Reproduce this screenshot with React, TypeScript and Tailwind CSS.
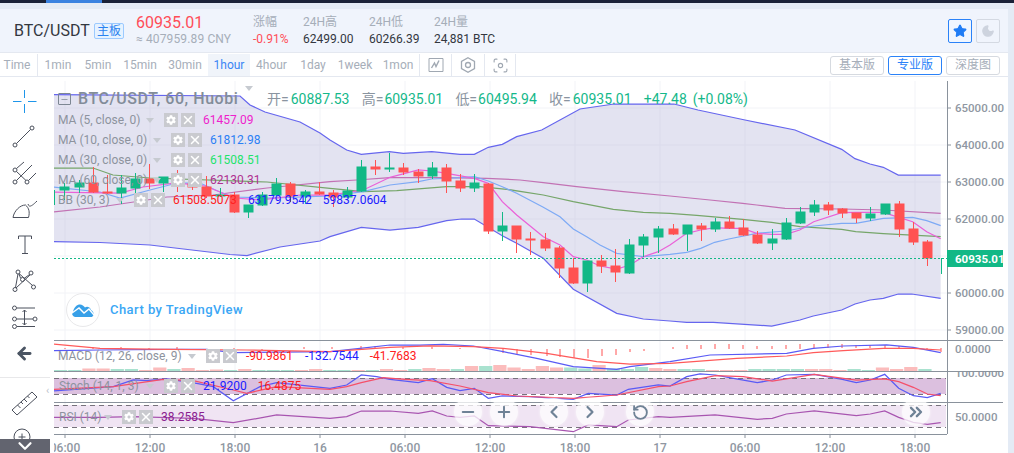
import { ChevronDown, ChevronLeft, ChevronRight, ChevronsRight, Focus, Minus, Moon, Plus, RotateCcw, Star, X, ArrowLeft } from "lucide-react";
import { FaCog } from "react-icons/fa";

type Pt = number[];

// points read off the 3x crops, mapped back to page pixels
const crop = (ox: number, oy: number, pts: Pt[]) => pts.map(([x, y]) => [x / 3 + ox, y / 3 + oy]);
const poly = (pts: Pt[]) => pts.map(([x, y]) => `${x.toFixed(1)},${y.toFixed(1)}`).join(" ");

const upper = [
  [54, 94.5], [240, 96], [250, 105], [265, 112], [300, 122], [320, 133],
  ...crop(330, 130, [[0, 30], [50, 60], [94, 73], [178, 65], [220, 70], [305, 65], [390, 73], [433, 73], [475, 52], [517, 43], [560, 20], [635, 0]]),
  [580, 109], [614, 104], [674, 104], [698, 110], [745, 120],
  ...crop(670, 130, [[375, 0], [515, 58], [555, 86], [600, 102], [640, 112], [685, 135], [812, 135]]),
];
const lower = [
  [54, 241.7], [100, 242.5], [150, 245], [175, 248], [230, 254.5], [247, 255.5], [280, 247], [320, 241],
  ...crop(330, 130, [[0, 320], [94, 292], [180, 300], [265, 292], [350, 272], [395, 267], [433, 267], [517, 317], [560, 340], [640, 385], [730, 478], [860, 550], [940, 567], [1020, 573]]),
  ...crop(670, 130, [[50, 577], [130, 577], [305, 588], [390, 570], [430, 558], [515, 540], [555, 522], [600, 510], [640, 505], [685, 492], [725, 492], [812, 505]]),
];

const ma5 = [
  [54, 192], [120, 193], [143, 187], [176, 183], [205, 186], [235, 198], [260, 200], [300, 195], [330, 195],
  ...crop(330, 130, [[100, 180], [180, 142], [265, 120], [305, 123], [350, 130], [433, 145], [475, 160], [517, 215], [560, 255], [640, 320], [690, 345], [730, 380], [770, 390], [810, 408], [860, 417], [900, 405], [940, 380], [985, 365], [1020, 345]]),
  ...crop(670, 130, [[50, 310], [92, 300], [134, 293], [176, 295], [218, 295], [260, 310], [305, 313], [347, 313], [389, 300], [431, 275], [515, 248], [557, 247], [640, 247], [686, 262], [728, 275], [770, 305], [812, 326]]),
];
const ma10 = [
  [54, 187], [100, 192], [120, 198], [150, 190], [177, 183], [200, 183], [220, 192], [233, 197], [267, 198], [330, 196],
  ...crop(330, 130, [[100, 185], [180, 165], [265, 155], [305, 147], [390, 143], [433, 140], [475, 153], [517, 170], [560, 190], [640, 232], [690, 260], [730, 297], [770, 320], [810, 345], [860, 370], [900, 375], [940, 380], [1020, 373]]),
  ...crop(670, 130, [[50, 367], [92, 355], [134, 337], [176, 327], [260, 310], [347, 303], [431, 288], [515, 280], [557, 280], [640, 265], [728, 262], [770, 272], [812, 287]]),
];
const ma30 = [
  [54, 168], [93, 168], [113, 175], [150, 178], [267, 182],
  ...crop(330, 130, [[0, 175], [100, 185], [200, 182], [350, 170], [450, 170], [530, 178], [640, 195], [730, 215], [850, 238], [940, 247], [1020, 250]]),
  ...crop(670, 130, [[80, 256], [218, 268], [305, 277], [390, 290], [515, 298], [557, 305], [640, 311], [812, 320]]),
];
const ma60 = [
  [54, 212], [100, 207], [127, 203], [167, 197], [213, 195], [267, 188],
  ...crop(330, 130, [[0, 155], [80, 150], [180, 143], [340, 143], [470, 145], [570, 150], [640, 158], [740, 170], [880, 185], [1020, 198]]),
  ...crop(670, 130, [[120, 210], [218, 220], [260, 225], [345, 235], [515, 237], [640, 240], [812, 250]]),
];

const macdBlue = [
  ...crop(0, 230, [[162, 362], [300, 360], [500, 358], [620, 358], [700, 368], [990, 365]]),
  ...crop(330, 330, [[90, 55], [180, 45], [270, 45], [340, 43], [430, 48], [520, 65], [620, 85], [730, 110], [860, 118], [900, 110], [1020, 95]]),
  ...crop(670, 330, [[120, 75], [350, 70], [430, 55], [520, 48], [650, 45], [730, 52], [812, 68]]),
];
const macdRed = [
  ...crop(0, 230, [[162, 342], [300, 355], [500, 358], [740, 360], [990, 365]]),
  ...crop(330, 330, [[180, 52], [300, 48], [430, 50], [520, 55], [650, 70], [800, 95], [900, 102], [1020, 100]]),
  ...crop(670, 330, [[200, 85], [350, 78], [430, 68], [520, 62], [640, 55], [730, 55], [812, 60]]),
];
const stochBlue = [
  ...crop(0, 230, [[162, 483], [340, 470], [400, 450], [440, 452], [500, 447], [590, 460], [640, 470], [700, 512], [780, 470], [830, 458], [990, 475]]),
  ...crop(330, 330, [[50, 165], [94, 135], [140, 140], [180, 148], [265, 158], [307, 146], [350, 172], [390, 182], [433, 175], [475, 205], [517, 198], [600, 200], [730, 208], [775, 190], [860, 195], [895, 178], [985, 165]]),
  ...crop(670, 330, [[0, 168], [50, 140], [90, 132], [136, 135], [178, 143], [262, 158], [307, 150], [349, 135], [433, 133], [517, 148], [559, 158], [601, 150], [644, 133], [686, 175], [730, 197], [772, 203], [812, 190]]),
];
const stochRed = [
  ...crop(0, 230, [[162, 478], [340, 470], [490, 448], [580, 452], [700, 480], [740, 490], [830, 470], [990, 478]]),
  ...crop(330, 330, [[50, 170], [94, 158], [160, 143], [225, 148], [300, 152], [390, 168], [475, 188], [560, 198], [730, 205], [860, 195], [985, 170]]),
  ...crop(670, 330, [[0, 168], [50, 155], [136, 137], [220, 140], [307, 153], [433, 133], [559, 150], [644, 147], [686, 155], [730, 172], [772, 192], [812, 197]]),
];
const rsi = [
  ...crop(0, 230, [[162, 562], [300, 562], [400, 560], [580, 565], [700, 578], [830, 555], [990, 565]]),
  ...crop(330, 330, [[50, 260], [94, 243], [180, 243], [265, 250], [307, 243], [350, 258], [390, 262], [433, 258], [475, 287], [600, 290], [730, 305], [775, 285], [860, 290], [895, 270], [985, 260]]),
  ...crop(670, 330, [[0, 262], [135, 255], [262, 268], [307, 265], [349, 252], [433, 243], [559, 257], [601, 252], [644, 243], [686, 262], [730, 277], [772, 283], [812, 278]]),
];

// x, wick top, body top, body bottom, wick bottom, up?
const candles: [number, number, number, number, number, boolean][] = [
  [54, 190, 190, 205, 205, true], [64, 183, 187, 191, 200, true], [79, 180, 183, 188, 193, true],
  [93, 167, 183, 193, 193, false], [107, 175, 192, 194, 194, false], [121, 175, 188, 194, 204, true],
  [135, 173, 179, 189, 198, true], [149, 164, 179, 184, 189, false], [163, 177, 177, 184, 192, true],
  [177, 170, 177, 185, 192, false], [192, 173, 184, 188, 190, false], [206, 176, 187, 197, 198, false],
  [220, 188, 195, 197, 197, true], [234, 192, 195, 213, 213, false], [248, 205, 205, 213, 218, true],
  [262, 192, 195, 206, 206, true], [276, 178, 184, 196, 196, true], [290, 182, 184, 197, 202, false],
  [305, 190, 192, 197, 204, true], [319, 182, 192, 195, 195, false], [333, 190, 193, 198, 207, false],
  [347, 187, 191, 198, 198, true], [361, 160, 167, 192, 192, true], [375, 160, 167, 170, 175, false],
  [389, 153, 168, 170, 172, true], [403, 163, 168, 173, 175, false], [418, 169, 172, 177, 183, false],
  [432, 162, 168, 177, 179, true], [446, 164, 168, 182, 193, false], [460, 174, 181, 189, 192, false],
  [474, 174, 183, 189, 192, true], [488, 183, 184, 232, 234, false], [502, 212, 226, 232, 241, true],
  [516, 226, 226, 240, 253, false], [530, 232, 239, 241, 255, false], [545, 233, 240, 249, 251, false],
  [559, 246, 248, 269, 278, false], [573, 258, 268, 284, 284, false], [587, 261, 261, 284, 292, true],
  [601, 255, 261, 267, 273, false], [615, 249, 266, 273, 282, false], [629, 239, 245, 274, 274, true],
  [643, 234, 237, 246, 257, true], [658, 226, 229, 238, 253, true], [673, 224, 229, 235, 235, false],
  [687, 225, 225, 235, 251, true], [701, 223, 226, 230, 241, false], [715, 218, 222, 230, 232, true],
  [729, 216, 222, 229, 229, false], [743, 219, 228, 236, 236, false], [757, 231, 235, 244, 244, false],
  [772, 229, 239, 244, 250, true], [786, 218, 223, 240, 240, true], [800, 207, 212, 224, 224, true],
  [814, 200, 205, 213, 216, true], [828, 202, 205, 211, 215, false], [842, 208, 209, 214, 218, false],
  [856, 213, 213, 219, 223, false], [870, 207, 214, 219, 221, true], [885, 204, 204, 215, 215, true],
  [899, 201, 204, 230, 237, false], [913, 222, 229, 243, 245, false], [927, 240, 242, 259, 266, false],
  [941, 258, 258, 259, 274, true],
];

// macd ticks: x, top, bottom
const ticks: Pt[] = [
  [65, 348, 349], [93, 347, 349], [107, 348, 349], [121, 347, 349], [149, 348, 350], [177, 347, 349], [234, 348, 350], [262, 349, 350],
  [304, 347, 349], [332, 347, 349], [361, 346, 349], [375, 346, 349], [403, 347, 349], [432, 347, 349], [460, 348, 349], [488, 348, 349],
  [503, 349, 353], [517, 349, 354], [531, 349, 355], [547, 349, 356], [560, 349, 357], [574, 349, 358], [588, 349, 358], [602, 349, 356], [616, 349, 355], [630, 349, 352], [644, 349, 351], [660, 349, 349],
  [673, 347, 349], [687, 345, 349], [701, 345, 349], [715, 344, 349], [729, 344, 349], [743, 345, 349], [757, 346, 349], [772, 346, 349], [786, 345, 349], [800, 344, 349], [814, 344, 348], [828, 344, 348], [842, 344, 348], [856, 345, 348], [870, 345, 348], [885, 345, 348], [899, 346, 348], [913, 347, 348], [927, 348, 350], [941, 348, 352],
];

// volume-like bars at the foot of the macd pane: up?, top
const bars: [boolean, number][] = [
  [true, 370], [true, 370], [false, 368.5], [false, 368.5], [true, 369], [true, 369], [false, 370], [false, 367.5], [true, 369], [false, 368], [false, 370], [false, 369.5],
  [true, 370], [false, 369], [true, 370], [true, 370], [true, 370], [false, 370], [false, 369], [true, 370], [true, 370], [false, 370],
  [true, 370], [false, 369], [false, 370], [true, 369], [false, 368], [false, 369], [true, 369], [false, 366], [true, 366], [false, 365], [false, 367.5], [false, 369], [false, 366], [false, 367.5], [true, 367.5], [true, 368.5], [false, 365], [true, 368.5], [true, 369], [true, 367], [false, 368],
  [false, 369], [true, 369], [true, 369], [false, 370], [false, 370], [false, 370], [true, 369], [true, 369], [true, 369], [true, 369], [false, 369], [false, 369], [false, 370], [true, 369], [true, 370], [false, 367.5], [false, 369], [false, 367], [true, 369],
];

const gridX = [65, 150, 235, 320, 405, 490, 575, 660, 745, 830, 915];
const gridY = [108, 145, 182, 219, 256, 293, 330];
const priceLabels = ["65000.00", "64000.00", "63000.00", "62000.00", "", "60000.00", "59000.00"];
const timeLabels = ["06:00", "12:00", "18:00", "16", "06:00", "12:00", "18:00", "17", "06:00", "12:00", "18:00"];

const intervals = [
  { label: "1min", w: "w-[40px]" },
  { label: "5min", w: "w-[40px]" },
  { label: "15min", w: "w-[44px]" },
  { label: "30min", w: "w-[46px]" },
  { label: "1hour", w: "w-[42px]", on: true },
  { label: "4hour", w: "w-[43px]" },
  { label: "1day", w: "w-[40px]" },
  { label: "1week", w: "w-[44px]" },
  { label: "1mon", w: "w-[42px]" },
];

const stats = [
  { title: "24H高", value: "62499.00", w: "w-[66px]" },
  { title: "24H低", value: "60266.39", w: "w-[65px]" },
  { title: "24H量", value: "24,881 BTC", w: "w-[70px]" },
];

const roboto = "font-['Roboto',sans-serif]";
const cjk = "font-['Roboto','Noto_Sans_CJK_SC',sans-serif]";

function ToolIcon({ y, children }: { y: number; children: React.ReactNode }) {
  return (
    <svg viewBox={`6 ${y} 36 36`} className="block h-9 w-9 shrink-0 overflow-visible" fill="none" stroke="#4b505c" strokeWidth="1">
      {children}
    </svg>
  );
}

function LeftTools() {
  return (
    <div className="relative flex w-[54px] shrink-0 flex-col pl-[6px] pt-[6px]">
      <ToolIcon y={83}>
        <path d="M24.5 90v8M24.5 104v9M13 101.500h8.500M28 101.500h8.500" stroke="#1e96ea" />
      </ToolIcon>
      <ToolIcon y={119}>
        <circle cx="15" cy="145" r="2" />
        <circle cx="32" cy="128" r="2" />
        <path d="M16.500 143.500L30.500 129.500" />
      </ToolIcon>
      <ToolIcon y={155}>
        <circle cx="15" cy="170" r="2" />
        <circle cx="15" cy="182" r="2" />
        <circle cx="27" cy="182" r="2" />
        <path d="M16.500 168.500L24 162M16.500 180.500L32 165M28.500 180.500L36 173M16.500 171.500L26 180.500" />
      </ToolIcon>
      <ToolIcon y={191}>
        <path d="M13 217.500C14 211 20 205 25.500 205C29 208 30 212 28.500 217.500Z" />
        <path d="M28 204C29 208 32 206 37 201" />
      </ToolIcon>
      <ToolIcon y={227}>
        <path d="M18.500 239v-3h13v3M25 236v17.500M22 253.500h6" />
      </ToolIcon>
      <ToolIcon y={263}>
        <circle cx="18" cy="272" r="2" />
        <circle cx="31" cy="273" r="2" />
        <circle cx="22.500" cy="279.500" r="2" />
        <circle cx="15" cy="289.500" r="2" />
        <circle cx="33.500" cy="287" r="2" />
        <path d="M18 274L15.500 287.500M19 273.500L32.500 285.500M30 275L16 288M24 278.500L29.500 274.500M20.500 278L19 274" />
      </ToolIcon>
      <ToolIcon y={299}>
        <circle cx="14.500" cy="308" r="2" />
        <circle cx="14.500" cy="319" r="2" />
        <circle cx="14.500" cy="326.500" r="2" />
        <circle cx="35" cy="319" r="2" />
        <path d="M17 308h18M17 319h16M17 326.500h18M24.500 310v15M22.500 312l2-2 2 2M22.500 323l2 2 2-2" />
      </ToolIcon>
      <div className="flex h-9 w-9 shrink-0 items-center justify-center">
        <ArrowLeft size={19} color="#4b5563" strokeWidth={3.6} />
      </div>
      <div className="mt-[6px] ml-[-6px] h-[1px] w-[50px] shrink-0 bg-[#e8e8ea]" />
      <div className="mt-[7px]" />
      <ToolIcon y={385}>
        <path d="M12 410L32 392L37 397L17 415Z" />
        <path d="M17.500 405l3 3M21 402l2 2M24 399l3 3M27.500 396l2 2" />
      </ToolIcon>
      <ToolIcon y={421}>
        <circle cx="22" cy="437" r="8" />
        <path d="M22 433.500v7M18.500 437h7M28 443l5 5" />
      </ToolIcon>
      <span className="absolute left-[46px] top-[308px] text-[11px] leading-none text-[#bcc2cc]">‹</span>
      <div className="absolute bottom-0 left-0 flex h-[14px] w-[50px] items-center justify-center overflow-hidden bg-[#62646f]">
        <ChevronDown size={22} color="#fff" strokeWidth={2.4} />
      </div>
    </div>
  );
}

function Caret() {
  return <span className="h-0 w-0 border-x-[4px] border-t-[5px] border-x-transparent border-t-[#c6cad0]" />;
}

function LegendRow({ label, w, values }: { label: string; w: string; values: { text: string; color: string; ml: string }[] }) {
  return (
    <div className={`flex h-5 items-center ${roboto} text-[12px]`}>
      <div className={`flex ${w} items-center justify-between pr-[10px] text-[#8d939e]`}>
        <span className="whitespace-nowrap">{label}</span>
        <Caret />
      </div>
      <span className="flex h-[14px] w-[14px] items-center justify-center bg-[#c9cacf]">
        <FaCog size={10} color="#fff" />
      </span>
      <span className="ml-[3px] flex h-[14px] w-[14px] items-center justify-center bg-[#c9cacf]">
        <X size={14} color="#fff" strokeWidth={2.5} />
      </span>
      {values.map((v) => (
        <span key={v.text} className={`${v.ml} ${v.color} whitespace-nowrap`}>
          {v.text}
        </span>
      ))}
    </div>
  );
}

function ChartSvg() {
  return (
    <svg viewBox="54 77 954 376" className="block h-[376px] w-[954px]" fill="none">
      <defs>
        <clipPath id="stoch-axis">
          <rect x="947" y="372" width="61" height="30" />
        </clipPath>
      </defs>
      {gridY.map((y) => (
        <line key={y} x1="54" x2="947" y1={y} y2={y} stroke="#f2f3f7" />
      ))}
      {gridX.map((x) => (
        <line key={x} x1={x} x2={x} y1="81" y2="434" stroke="#f2f3f7" />
      ))}

      <polygon points={poly([...upper, ...[...lower].reverse()])} fill="#b9b9dc" fillOpacity="0.4" />
      <g strokeWidth="1.25">
        <polyline points={poly(upper)} stroke="#6666ee" />
        <polyline points={poly(lower)} stroke="#6666ee" />
        <polyline points={poly(ma60)} stroke="#c272b4" />
        <polyline points={poly(ma30)} stroke="#76a66a" />
        <polyline points={poly(ma10)} stroke="#7eaaf5" />
        <polyline points={poly(ma5)} stroke="#ea62d8" />
      </g>

      {candles.map(([x, wt, bt, bb, wb, up]) => (
        <g key={x} fill={up ? "#12b886" : "#ff5252"} stroke={up ? "#12b886" : "#ff5252"}>
          <line x1={x + 0.5} x2={x + 0.5} y1={wt} y2={wb} />
          {x > 54 && <rect x={x - 4} y={bt} width="9" height={Math.max(bb - bt - 1, 0)} />}
        </g>
      ))}

      <line x1="54" x2="947" y1="258.500" y2="258.500" stroke="#12b886" strokeDasharray="2 2" />

      {/* macd pane */}
      {bars.map(([up, top], i) => (
        <rect key={i} x={54 + i * 14.17} y={top} width="13.200" height={371 - top} fill={up ? "#a9e2cf" : "#fbbcbc"} />
      ))}
      {ticks.map(([x, a, b]) => (
        <line key={x} x1={x} x2={x} y1={a} y2={b} stroke="#ff5252" />
      ))}
      <g strokeWidth="1.25">
        <polyline points={poly(macdBlue)} stroke="#5a5af5" />
        <polyline points={poly(macdRed)} stroke="#ff5a5a" />
      </g>

      {/* stoch pane */}
      <rect x="54" y="378" width="892" height="16" fill="#dcc0df" />
      <line x1="54" x2="946" y1="378.500" y2="378.500" stroke="#77727c" strokeDasharray="5 4" />
      <line x1="54" x2="946" y1="394.500" y2="394.500" stroke="#77727c" strokeDasharray="5 4" />
      <g strokeWidth="1.25">
        <polyline points={poly(stochBlue)} stroke="#5a5af5" />
        <polyline points={poly(stochRed)} stroke="#f5506a" />
      </g>

      {/* rsi pane */}
      <rect x="54" y="405" width="892" height="22" fill="#f0e4f3" />
      <line x1="54" x2="946" y1="405.500" y2="405.500" stroke="#77727c" strokeDasharray="5 4" />
      <line x1="54" x2="946" y1="427.500" y2="427.500" stroke="#77727c" strokeDasharray="5 4" />
      <polyline points={poly(rsi)} stroke="#a855b0" strokeWidth="1.25" />

      {/* pane rules and axis */}
      <line x1="54" x2="1003" y1="340.500" y2="340.500" stroke="#8a929c" />
      <line x1="54" x2="1003" y1="371.500" y2="371.500" stroke="#8a929c" />
      <line x1="54" x2="1003" y1="402.500" y2="402.500" stroke="#8a929c" />
      <line x1="54" x2="947" y1="434.500" y2="434.500" stroke="#8a929c" />
      <line x1="947.500" x2="947.500" y1="81" y2="434" stroke="#8a929c" />
      {gridY.map((y) => (
        <line key={y} x1="947" x2="951" y1={y} y2={y} stroke="#8a929c" />
      ))}
      {gridX.map((x) => (
        <line key={x} x1={x} x2={x} y1="434" y2="438" stroke="#8a929c" />
      ))}

      <g className={`${roboto} text-[11.5px]`} fill="#8f97a2" fontWeight="500">
        {priceLabels.map((t, i) => (
          <text key={gridY[i]} x="955" y={gridY[i] + 4}>{t}</text>
        ))}
        <text x="955" y="353">0.0000</text>
        <text x="955" y="376.500" clipPath="url(#stoch-axis)">100.0000</text>
        <text x="955" y="421">50.0000</text>
        {timeLabels.map((t, i) => (
          <text key={i} x={gridX[i]} y="452" textAnchor="middle" className="text-[12px]">{t}</text>
        ))}
      </g>
      <rect x="947" y="250" width="56" height="17" fill="#12b886" />
      <text x="955" y="262.500" fill="#fff" fontWeight="700" className={`${roboto} text-[11.5px]`}>60935.01</text>
    </svg>
  );
}

function RoundBtn({ className, children }: { className?: string; children: React.ReactNode }) {
  return (
    <span className={`flex h-7 w-7 items-center justify-center rounded-full bg-white/75 shadow-[0_0_3px_rgba(255,255,255,0.7)] ${className ?? ""}`}>
      {children}
    </span>
  );
}

export default function App() {
  const iconBtn = "flex h-6 w-6 items-center justify-center rounded-[2px] border";
  const depthBtn = "flex h-[19px] w-[54px] items-center justify-center rounded-[3px] border text-[12px]";
  return (
    <div className={`flex h-[453px] w-[1014px] flex-col overflow-hidden bg-[#e4ebf5] ${cjk}`}>
      <div className="h-[3px] shrink-0 bg-[#1a2238] pl-[46px]">
        <div className="h-[3px] w-[56px] bg-[#3a82e0]" />
      </div>
      <div className="h-[6px] shrink-0" />

      <div className="w-[1008px] shrink-0">
        <div className="flex h-[43px] items-center bg-[#f0f4fc] pl-[14px] pr-[8px]">
          <span className="w-[75px] text-[16px] text-[#33373f]">BTC/USDT</span>
          <span className="ml-[5px] flex h-[16px] w-[30px] items-center justify-center rounded-[2px] border border-[#9ccaff] bg-[#e6f2ff] text-[12px] leading-none text-[#2a82f0]">主板</span>
          <div className="ml-[12px] w-[117px]">
            <div className="text-[16px] leading-[17px] text-[#ff4d58]">60935.01</div>
            <div className="text-[12px] leading-[16px] tracking-[0.13px] text-[#a6aeb9]">≈ 407959.89 CNY</div>
          </div>
          <div className="w-[50px]">
            <div className="text-[12px] leading-[17px] text-[#a6aeb9]">涨幅</div>
            <div className="text-[12px] leading-[16px] text-[#ff4d58]">-0.91%</div>
          </div>
          {stats.map((s) => (
            <div key={s.title} className={s.w}>
              <div className="text-[12px] leading-[17px] text-[#a6aeb9]">{s.title}</div>
              <div className="whitespace-nowrap text-[12px] leading-[16px] text-[#33373f]">{s.value}</div>
            </div>
          ))}
          <div className="ml-auto flex gap-1">
            <span className={`${iconBtn} border-[#2a82f8] bg-[#f0f6ff]`}>
              <Star size={14} fill="#1f7cf5" color="#1f7cf5" />
            </span>
            <span className={`${iconBtn} border-[#d4d9e2] bg-[#f0f4fc]`}>
              <Moon size={14} fill="#cdd3de" color="#cdd3de" />
            </span>
          </div>
        </div>

        <div className="flex h-[25px] items-stretch border-y border-[#e4e8f0] bg-white pt-[1px] text-[12px] text-[#a6aeb9]">
          <span className="flex w-[38px] items-center justify-center border-r border-[#e4e8f0] pr-[3px]">Time</span>
          {intervals.map((t) => (
            <span key={t.label} className={`flex ${t.w} items-center justify-center ${t.on ? "bg-[#f0f4fa] text-[#3a86f5]" : ""}`}>
              {t.label}
            </span>
          ))}
          <span className="flex w-[33px] items-center justify-center border-x border-[#e4e8f0]">
            <svg viewBox="0 0 16 16" className="h-4 w-4" fill="none" stroke="#a0a8b2">
              <path d="M1 1.500V14.500H15V1.500H1Z" />
              <path d="M3.500 11L6.500 6L8 9.500L11 3.500" strokeWidth="1.400" />
            </svg>
          </span>
          <span className="flex w-[33px] items-center justify-center border-r border-[#e4e8f0]">
            <svg viewBox="0 0 16 16" className="h-4 w-4" fill="none" stroke="#a0a8b2" strokeWidth="1.300">
              <path d="M8 .8L14.500 4.400V11.600L8 15.200L1.500 11.600V4.400Z" />
              <circle cx="8" cy="8" r="2.500" />
            </svg>
          </span>
          <span className="flex w-[31px] items-center justify-center border-r border-[#e4e8f0]">
            <Focus size={17} color="#a0a8b2" strokeWidth={1.6} />
          </span>
          <div className="ml-auto mr-[8px] flex items-center gap-1">
            <span className={`${depthBtn} border-[#d6dae0]`}>基本版</span>
            <span className={`${depthBtn} border-[#2a82f8] text-[#2a82f8]`}>专业版</span>
            <span className={`${depthBtn} border-[#d6dae0]`}>深度图</span>
          </div>
        </div>

        <div className="flex h-[376px] bg-white">
          <LeftTools />
          <div className="relative w-[954px]">
            <ChartSvg />

            <div className="absolute left-[4px] top-[12px] flex flex-col">
              <div className={`flex h-[20px] items-center ${cjk} text-[14px] text-[#8a94a0]`}>
                <span className="flex h-[12px] w-[13px] items-center justify-center rounded-[1px] border border-[#7d8793]">
                  <Minus size={9} color="#7d8793" />
                </span>
                <span className="ml-[7px] w-[162px] whitespace-nowrap text-[16px] font-medium tracking-[0.55px] text-[#828c99]">BTC/USDT, 60, Huobi</span>
                <span className="ml-[5px] mr-[14px]"><Caret /></span>
                <span>开=</span><span className="ml-[2px] w-[71px] text-[#14b88a]">60887.53</span>
                <span>高=</span><span className="ml-[1px] w-[71px] text-[#14b88a]">60935.01</span>
                <span>低=</span><span className="ml-[1px] w-[71px] text-[#14b88a]">60495.94</span>
                <span>收=</span><span className="ml-[2px] w-[71px] text-[#14b88a]">60935.01</span>
                <span className="w-[49px] text-[#14b88a]">+47.48</span>
                <span className="text-[#14b88a]">(+0.08%)</span>
              </div>
              <div className="h-[1px]" />
              <LegendRow label="MA (5, close, 0)" w="w-[106px]" values={[{ text: "61457.09", color: "text-[#ee22cc]", ml: "ml-[8px]" }]} />
              <LegendRow label="MA (10, close, 0)" w="w-[113px]" values={[{ text: "61812.98", color: "text-[#2b80f5]", ml: "ml-[8px]" }]} />
              <LegendRow label="MA (30, close, 0)" w="w-[113px]" values={[{ text: "61508.51", color: "text-[#22e36c]", ml: "ml-[8px]" }]} />
              <LegendRow label="MA (60, close, 0)" w="w-[113px]" values={[{ text: "62130.31", color: "text-[#b03090]", ml: "ml-[8px]" }]} />
              <LegendRow
                label="BB (30, 3)"
                w="w-[76px]"
                values={[
                  { text: "61508.5073", color: "text-[#ff2020]", ml: "ml-[8px]" },
                  { text: "63179.9542", color: "text-[#2020ff]", ml: "ml-[11px]" },
                  { text: "59837.0604", color: "text-[#2020ff]", ml: "ml-[11px]" },
                ]}
              />
            </div>

            <div className="absolute left-[12px] top-[216px] flex items-center">
              <span className="flex h-[34px] w-[34px] items-center justify-center rounded-full border border-[#e8e8ea] bg-white">
                <svg viewBox="0 0 22 13" className="h-[13px] w-[22px]">
                  <path d="M3 13A3 3 0 0 1 1 8C2 3 5 .5 8 .5C10 .5 12 2 13 3.500C15 2 18 3 19 6C21 7 22 9 21.500 11C21 12.500 20 13 19 13Z" fill="#38a0e8" />
                  <polyline points="0,9 7,4 12,9 17,5 22,11" fill="none" stroke="#fff" strokeWidth="1.400" />
                </svg>
              </span>
              <span className="ml-[10px] text-[13px] font-medium tracking-[0.45px] text-[#3ba7f5]">Chart by TradingView</span>
            </div>

            <div className="absolute left-[4px] top-[269px]">
              <LegendRow
                label="MACD (12, 26, close, 9)"
                w="w-[148px]"
                values={[
                  { text: "-90.9861", color: "text-[#ff2020]", ml: "ml-[9px]" },
                  { text: "-132.7544", color: "text-[#2020ff]", ml: "ml-[12px]" },
                  { text: "-41.7683", color: "text-[#ff2020]", ml: "ml-[11px]" },
                ]}
              />
            </div>
            <div className="absolute left-[5px] top-[299px]">
              <LegendRow
                label="Stoch (14, 1, 3)"
                w="w-[105px]"
                values={[
                  { text: "21.9200", color: "text-[#2020ff]", ml: "ml-[8px]" },
                  { text: "16.4875", color: "text-[#ff2020]", ml: "ml-[11px]" },
                ]}
              />
            </div>
            <div className="absolute left-[5px] top-[330px]">
              <LegendRow label="RSI (14)" w="w-[63px]" values={[{ text: "38.2585", color: "text-[#8a208f]", ml: "ml-[8px]" }]} />
            </div>

            <div className="absolute left-[400px] top-[321px] flex">
              <RoundBtn><Minus size={18} color="#6f8296" strokeWidth={2.6} /></RoundBtn>
              <RoundBtn className="ml-2"><Plus size={18} color="#6f8296" strokeWidth={2.6} /></RoundBtn>
              <RoundBtn className="ml-[22px]"><ChevronLeft size={20} color="#6f8296" strokeWidth={2.6} /></RoundBtn>
              <RoundBtn className="ml-2"><ChevronRight size={20} color="#6f8296" strokeWidth={2.6} /></RoundBtn>
              <RoundBtn className="ml-[22px]"><RotateCcw size={17} color="#6f8296" strokeWidth={2.6} /></RoundBtn>
              <RoundBtn className="ml-[248px]"><ChevronsRight size={20} color="#6f8296" strokeWidth={2.8} /></RoundBtn>
            </div>
          </div>
        </div>
      </div>
    </div>
  );
}
